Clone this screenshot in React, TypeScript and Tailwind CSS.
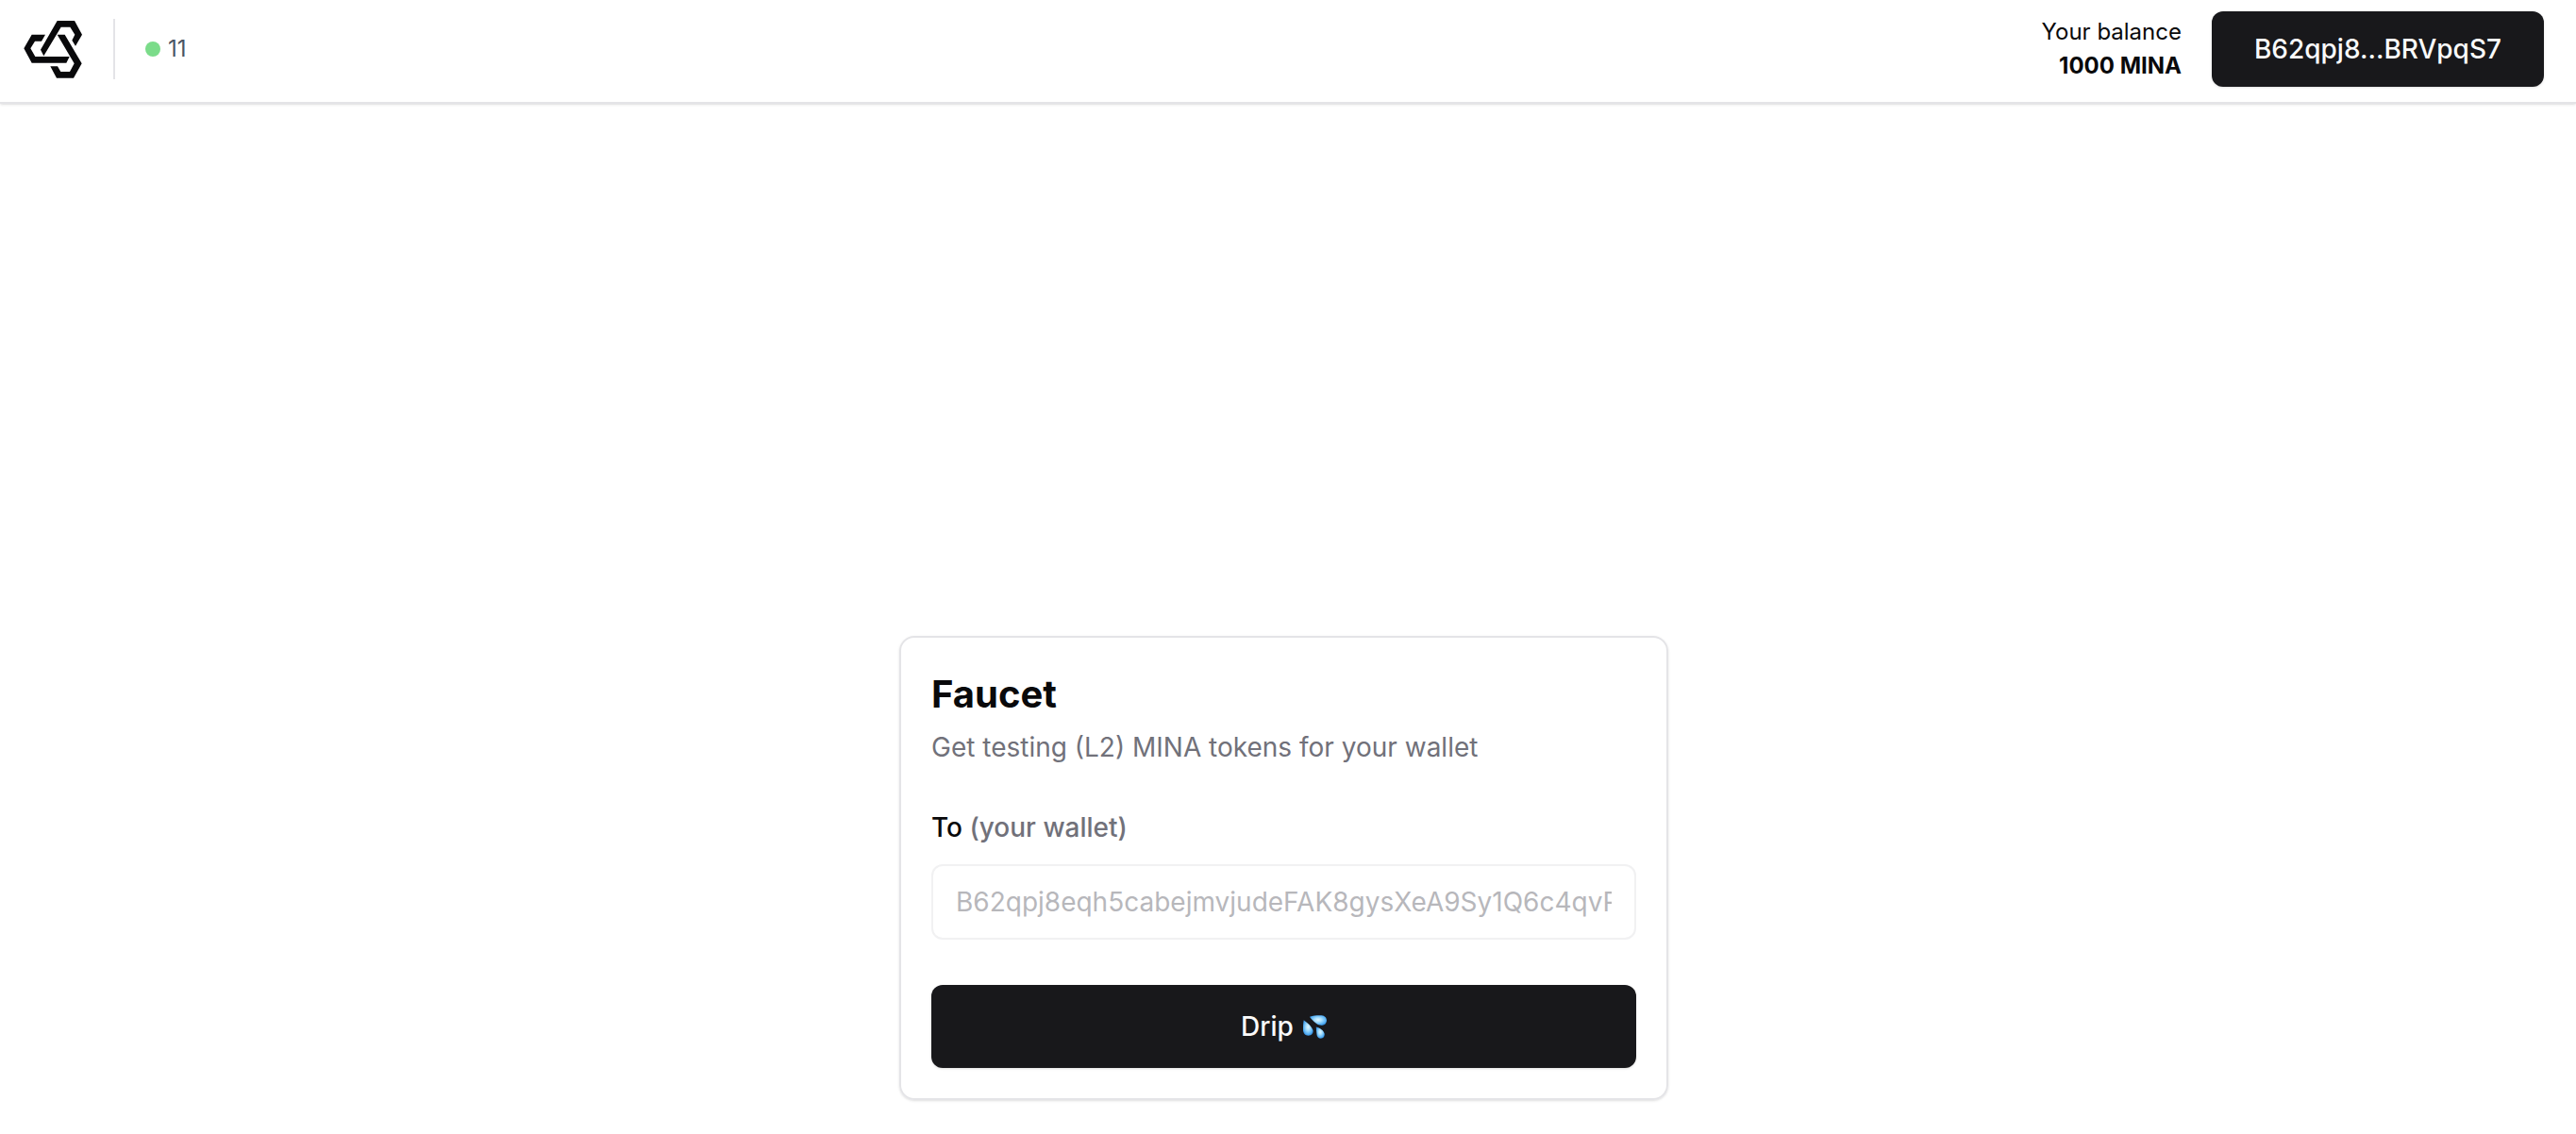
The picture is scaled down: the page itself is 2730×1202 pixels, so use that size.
import { useId } from "react";

function Logo() {
  return (
    <svg viewBox="75 66 186 183" className="h-[61px] w-[62px]" fill="#09090b" aria-hidden="true">
      <path d="M182 66H237L261 110L240 146L229 128L238 110L223 86H194L139 178L129 158Z" />
      <path d="M144 110H101L76 154L101 200H211L221 180H112L97 154L111 131H132Z" />
      <path d="M182 110H206L260 202L234 248H180L160 211H183L193 228H222L236 202Z" />
    </svg>
  );
}

function Drops() {
  const id = useId();
  return (
    <svg viewBox="240 78 76 76" className="size-[25px]" role="img" aria-label="droplets">
      <defs>
        <radialGradient id={id} cx="0.5" cy="0.45" r="0.6">
          <stop offset="0" stopColor="#e0f6ff" />
          <stop offset="0.35" stopColor="#a9dffc" />
          <stop offset="0.75" stopColor="#58b1f4" />
          <stop offset="1" stopColor="#2e86d6" />
        </radialGradient>
      </defs>
      <g fill={`url(#${id})`}>
        <path d="M261 83C274 79 290 78 300 79C310 80 316 87 316 96C315 106 307 112 298 111C284 109 272 97 261 83Z" />
        <path d="M242 94C255 103 268 115 272 127C274 137 267 144 257 144C246 144 240 136 240 126C240 116 240 104 242 94Z" />
        <path d="M282 116C294 119 306 127 309 138C310 147 305 153 297 153C289 153 285 147 284 140C283 132 282 123 282 116Z" />
      </g>
    </svg>
  );
}

function Header() {
  return (
    <header className="flex items-center justify-between border-b-2 border-[#e4e4e7] pt-3 pr-[34px] pb-4 pl-[25px] shadow-sm">
      <div className="flex items-center">
        <Logo />
        <div className="mr-8 ml-[33px] h-16 w-0.5 bg-[#e4e4e7]" />
        <div className="flex items-center gap-2">
          <span className="size-4 rounded-full bg-[#7bdc8a]" />
          <span className="text-2xl text-gray-600">11</span>
        </div>
      </div>
      <div className="flex items-center gap-8">
        <div className="text-right text-[24px] leading-9">
          <p>Your balance</p>
          <p className="font-bold">1000 MINA</p>
        </div>
        <button type="button" className="h-20 rounded-xl bg-[#18181b] px-[45px] text-[28px] font-medium text-[#fafafa] shadow-sm">
          B62qpj8...BRVpqS7
        </button>
      </div>
    </header>
  );
}

function Faucet() {
  return (
    <form className="w-full max-w-[815px] rounded-[16px] border-2 border-[#e4e4e7] p-8 shadow-sm" onSubmit={(e) => e.preventDefault()}>
      <h1 className="text-[40px] leading-14 font-bold">Faucet</h1>
      <p className="mt-2 text-[28px] leading-10 text-[#71717a]">Get testing (L2) MINA tokens for your wallet</p>
      <label htmlFor="wallet" className="mt-[45px] block text-[28px] leading-10 font-medium">
        To <span className="text-[#71717a]">(your wallet)</span>
      </label>
      <input
        id="wallet"
        type="text"
        disabled
        placeholder="B62qpj8eqh5cabejmvjudeFAK8gysXeA9Sy1Q6c4qvRBRVpqS7"
        className="mt-[19px] block h-20 w-full rounded-xl border-2 border-[#e4e4e7] bg-transparent px-6 text-[28px] opacity-50 placeholder:text-[#71717a]"
      />
      <button
        type="submit"
        className="mt-12 flex h-[88px] w-full items-center justify-center gap-2.5 rounded-xl bg-[#18181b] text-[28px] font-medium text-[#fafafa] shadow-sm"
      >
        Drip <Drops />
      </button>
    </form>
  );
}

export default function App() {
  return (
    <div className="flex min-h-screen flex-col bg-white font-['Inter',sans-serif] text-[#09090b]">
      <Header />
      <main className="flex flex-1 items-end justify-center pr-[9px] pb-9">
        <Faucet />
      </main>
    </div>
  );
}
